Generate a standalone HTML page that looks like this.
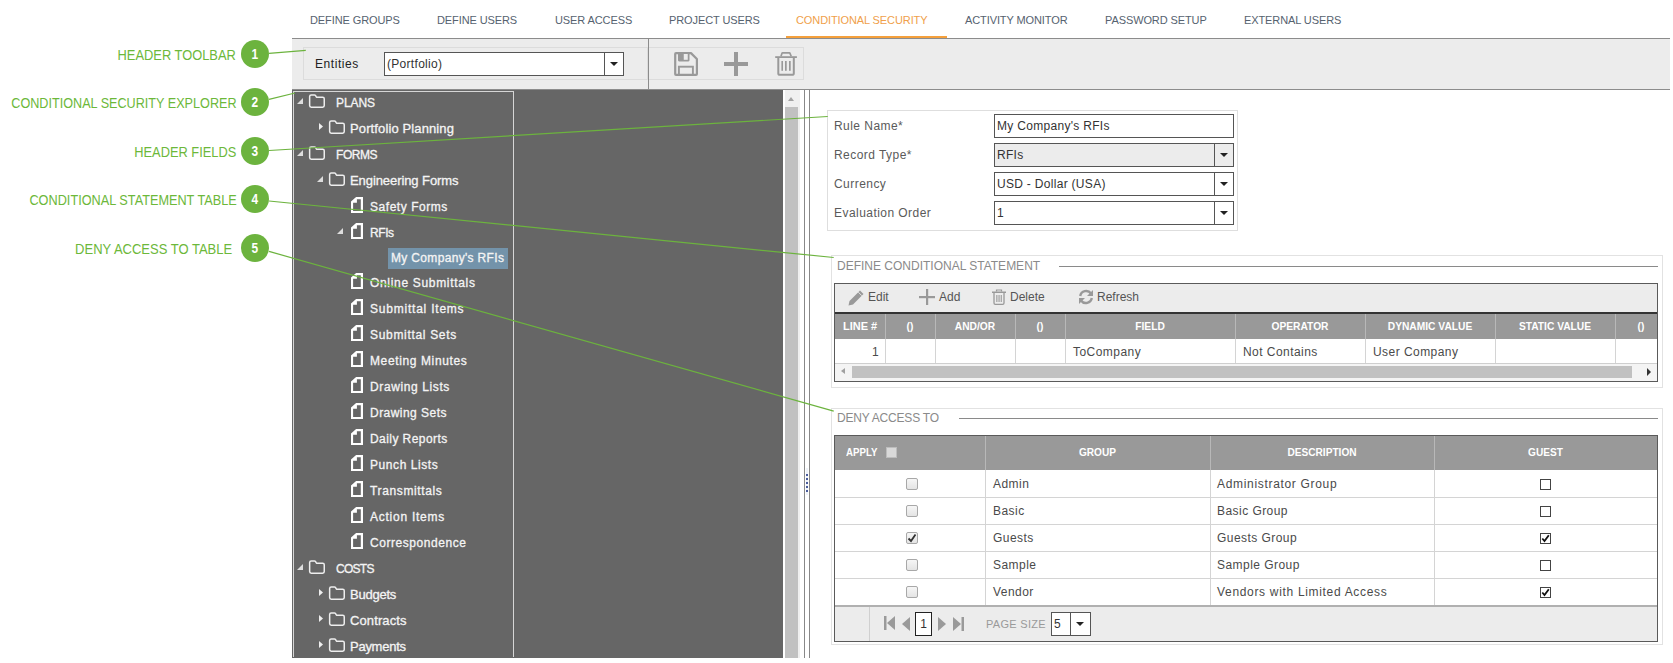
<!DOCTYPE html>
<html><head><meta charset="utf-8">
<style>
*{margin:0;padding:0;box-sizing:border-box}
html,body{width:1673px;height:663px;overflow:hidden;background:#fff}
body{position:relative;font-family:"Liberation Sans",sans-serif;font-size:13px;color:#333}
.a{position:absolute}
.nav{position:absolute;top:14px;font-size:11px;color:#56626f;letter-spacing:-0.1px;line-height:12px;white-space:nowrap}
.lbl{position:absolute;font-size:15px;color:#6cb83a;white-space:nowrap;line-height:16px;transform:scaleX(0.86);transform-origin:right center;text-align:right}
.circ{position:absolute;width:28px;height:28px;border-radius:50%;background:#6cb33e;color:#fff;font-size:14px;font-weight:bold;text-align:center;line-height:28px}
.circ span{display:inline-block;transform:scaleX(0.85)}
.tr{position:absolute;color:#f4f4f4;font-size:12px;white-space:nowrap;line-height:16px;letter-spacing:0.35px;-webkit-text-stroke:0.3px #f4f4f4}
.hl{position:absolute;font-size:12px;color:#5a5a5a;white-space:nowrap;line-height:16px;letter-spacing:0.45px}
.inp{position:absolute;border:1px solid #555;background:#fff;height:24px;font-size:12px;line-height:23px;padding-left:2px;color:#333;white-space:nowrap;letter-spacing:0.3px}
.dd{position:absolute;top:0;right:0;width:19px;height:22px;border-left:1px solid #555}
.dd:after{content:"";position:absolute;left:5px;top:9px;border-left:4px solid transparent;border-right:4px solid transparent;border-top:4.5px solid #222}
.gh{position:absolute;color:#fff;font-weight:bold;font-size:11px;line-height:12px;white-space:nowrap}
.cell{position:absolute;font-size:12px;color:#4a4a4a;white-space:nowrap;line-height:16px;letter-spacing:0.45px}
.vl{position:absolute;width:1px;background:#d0d0d0}
.hlin{position:absolute;height:1px;background:#d0d0d0}
.sect{position:absolute;font-size:12px;color:#8a8a8a;line-height:13px;white-space:nowrap;letter-spacing:0px}
.tb{position:absolute;font-size:12px;color:#555;line-height:16px;white-space:nowrap}
</style></head><body>

<!-- NAV TABS -->
<div class="nav" style="left:310px">DEFINE GROUPS</div>
<div class="nav" style="left:437px">DEFINE USERS</div>
<div class="nav" style="left:555px">USER ACCESS</div>
<div class="nav" style="left:669px">PROJECT USERS</div>
<div class="nav" style="left:796px;color:#f0a04a">CONDITIONAL SECURITY</div>
<div class="nav" style="left:965px">ACTIVITY MONITOR</div>
<div class="nav" style="left:1105px">PASSWORD SETUP</div>
<div class="nav" style="left:1244px">EXTERNAL USERS</div>
<div class="a" style="left:786px;top:36px;width:161px;height:2px;background:#f5a03c"></div>

<!-- TOOLBAR -->
<div class="a" style="left:292px;top:38px;width:1378px;height:52px;background:#ececec;border-top:1px solid #8c8c8c;border-bottom:1px solid #8c8c8c"></div>
<div class="a" style="left:648px;top:39px;width:1px;height:50px;background:#8c8c8c"></div>
<div class="a" style="left:303px;top:47px;width:345px;height:33px;border:1px solid #dcdcdc"></div>
<div class="a" style="left:649px;top:47px;width:155px;height:33px;border:1px solid #dcdcdc;border-left:none"></div>
<div class="a" style="left:315px;top:56px;font-size:12px;color:#222;line-height:16px;letter-spacing:0.55px">Entities</div>
<div class="inp" style="left:384px;top:52px;width:240px;color:#333">(Portfolio)<div class="dd"></div></div>
<!-- save icon -->
<svg class="a" style="left:674px;top:52px" width="24" height="24" viewBox="0 0 24 24"><path d="M1.2 2 Q1.2 1.1 2 1.1 H17 L22.9 7 V22 Q22.9 22.9 22 22.9 H2 Q1.2 22.9 1.2 22 Z" fill="none" stroke="#999" stroke-width="2.2" stroke-linejoin="round"/><path d="M4 1 H15.5 V8.3 Q15.5 9.4 14.4 9.4 H5.1 Q4 9.4 4 8.3 Z" fill="#999"/><rect x="9.75" y="2" width="4" height="5.8" fill="#ececec"/><rect x="4.9" y="14.7" width="14" height="8.3" fill="none" stroke="#999" stroke-width="1.9"/></svg>
<!-- plus -->
<svg class="a" style="left:724px;top:52px" width="24" height="24" viewBox="0 0 24 24"><rect x="10" y="0" width="4" height="24" fill="#999"/><rect x="0" y="10" width="24" height="4" fill="#999"/></svg>
<!-- trash -->
<svg class="a" style="left:775px;top:52px" width="22" height="24" viewBox="0 0 22 24"><rect x="0.2" y="4.2" width="21.7" height="1.8" fill="#999"/><path d="M6 4.2 L7 1.3 Q7.3 0.8 8 0.8 H14 Q14.7 0.8 15 1.3 L16.2 4.2" fill="none" stroke="#999" stroke-width="1.7"/><path d="M3.3 5.5 V21.5 Q3.3 22.8 5 22.8 H17 Q18.8 22.8 18.8 21.5 V5.5" fill="none" stroke="#999" stroke-width="2"/><rect x="6.4" y="9" width="1.6" height="9.8" fill="#999"/><rect x="10" y="9" width="1.7" height="9.8" fill="#999"/><rect x="14" y="9" width="1.7" height="9.8" fill="#999"/></svg>
<!-- TREE PANEL -->
<div class="a" style="left:292px;top:90px;width:491px;height:568px;background:#666"></div>
<div class="a" style="left:293px;top:91px;width:221px;height:566px;border:1px solid #d6d6d6;border-bottom:none"></div>
<!-- scrollbar -->
<div class="a" style="left:785px;top:90px;width:15px;height:568px;background:#f0f0f0"></div>
<div class="a" style="left:785px;top:107px;width:13px;height:551px;background:#c1c1c1"></div>
<div class="a" style="left:788px;top:97px;border-left:3.5px solid transparent;border-right:3.5px solid transparent;border-bottom:4px solid #a3a3a3"></div>
<div class="a" style="left:804px;top:90px;width:1px;height:568px;background:#888"></div>
<div class="a" style="left:809px;top:90px;width:1px;height:568px;background:#888"></div>

<div id="tree">
<svg class="a" style="left:297px;top:98px" width="6" height="6"><path d="M6 0 V6 H0 Z" fill="#ddd"/></svg>
<svg class="a" style="left:308px;top:94px" width="18" height="15"><path d="M1.65 11.6 V2.5 Q1.65 0.95 3.2 0.95 H6.5 Q7.2 0.95 7.6 1.6 L8.3 2.8 Q8.6 3.3 9.3 3.3 H14.7 Q16.25 3.3 16.25 4.8 V11.6 Q16.25 13.15 14.7 13.15 H3.2 Q1.65 13.15 1.65 11.6 Z" fill="none" stroke="#eee" stroke-width="1.5"/></svg>
<div class="tr" style="left:336px;top:95px;font-size:12px;letter-spacing:-0.1px">PLANS</div>
<svg class="a" style="left:319px;top:123px" width="4" height="7"><path d="M0 0 L4 3.5 L0 7 Z" fill="#eee"/></svg>
<svg class="a" style="left:328px;top:120px" width="18" height="15"><path d="M1.65 11.6 V2.5 Q1.65 0.95 3.2 0.95 H6.5 Q7.2 0.95 7.6 1.6 L8.3 2.8 Q8.6 3.3 9.3 3.3 H14.7 Q16.25 3.3 16.25 4.8 V11.6 Q16.25 13.15 14.7 13.15 H3.2 Q1.65 13.15 1.65 11.6 Z" fill="none" stroke="#eee" stroke-width="1.5"/></svg>
<div class="tr" style="left:350px;top:121px;font-size:13px;letter-spacing:0.12px">Portfolio Planning</div>
<svg class="a" style="left:297px;top:150px" width="6" height="6"><path d="M6 0 V6 H0 Z" fill="#ddd"/></svg>
<svg class="a" style="left:308px;top:146px" width="18" height="15"><path d="M1.65 11.6 V2.5 Q1.65 0.95 3.2 0.95 H6.5 Q7.2 0.95 7.6 1.6 L8.3 2.8 Q8.6 3.3 9.3 3.3 H14.7 Q16.25 3.3 16.25 4.8 V11.6 Q16.25 13.15 14.7 13.15 H3.2 Q1.65 13.15 1.65 11.6 Z" fill="none" stroke="#eee" stroke-width="1.5"/></svg>
<div class="tr" style="left:336px;top:147px;font-size:12px;letter-spacing:-0.45px">FORMS</div>
<svg class="a" style="left:317px;top:176px" width="6" height="6"><path d="M6 0 V6 H0 Z" fill="#ddd"/></svg>
<svg class="a" style="left:328px;top:172px" width="18" height="15"><path d="M1.65 11.6 V2.5 Q1.65 0.95 3.2 0.95 H6.5 Q7.2 0.95 7.6 1.6 L8.3 2.8 Q8.6 3.3 9.3 3.3 H14.7 Q16.25 3.3 16.25 4.8 V11.6 Q16.25 13.15 14.7 13.15 H3.2 Q1.65 13.15 1.65 11.6 Z" fill="none" stroke="#eee" stroke-width="1.5"/></svg>
<div class="tr" style="left:350px;top:173px;font-size:13px;letter-spacing:-0.08px">Engineering Forms</div>
<svg class="a" style="left:351px;top:197px" width="12" height="16"><path d="M0 4.5 L5.1 0 H12 V16 H0 Z M5.9 2.15 V5.8 H2.1 V13.9 H9.8 V2.15 Z" fill="#fff" fill-rule="evenodd"/></svg>
<div class="tr" style="left:370px;top:199px;letter-spacing:0.54px">Safety Forms</div>
<svg class="a" style="left:337px;top:228px" width="6" height="6"><path d="M6 0 V6 H0 Z" fill="#ddd"/></svg>
<svg class="a" style="left:351px;top:223px" width="12" height="16"><path d="M0 4.5 L5.1 0 H12 V16 H0 Z M5.9 2.15 V5.8 H2.1 V13.9 H9.8 V2.15 Z" fill="#fff" fill-rule="evenodd"/></svg>
<div class="tr" style="left:370px;top:225px;letter-spacing:-0.43px">RFIs</div>
<div class="a" style="left:388px;top:248px;width:120px;height:21px;background:#7393aa"></div>
<div class="tr" style="left:391px;top:250px;letter-spacing:0.33px">My Company's RFIs</div>
<svg class="a" style="left:351px;top:273px" width="12" height="16"><path d="M0 4.5 L5.1 0 H12 V16 H0 Z M5.9 2.15 V5.8 H2.1 V13.9 H9.8 V2.15 Z" fill="#fff" fill-rule="evenodd"/></svg>
<div class="tr" style="left:370px;top:275px;letter-spacing:0.68px">Online Submittals</div>
<svg class="a" style="left:351px;top:299px" width="12" height="16"><path d="M0 4.5 L5.1 0 H12 V16 H0 Z M5.9 2.15 V5.8 H2.1 V13.9 H9.8 V2.15 Z" fill="#fff" fill-rule="evenodd"/></svg>
<div class="tr" style="left:370px;top:301px;letter-spacing:0.78px">Submittal Items</div>
<svg class="a" style="left:351px;top:325px" width="12" height="16"><path d="M0 4.5 L5.1 0 H12 V16 H0 Z M5.9 2.15 V5.8 H2.1 V13.9 H9.8 V2.15 Z" fill="#fff" fill-rule="evenodd"/></svg>
<div class="tr" style="left:370px;top:327px;letter-spacing:0.68px">Submittal Sets</div>
<svg class="a" style="left:351px;top:351px" width="12" height="16"><path d="M0 4.5 L5.1 0 H12 V16 H0 Z M5.9 2.15 V5.8 H2.1 V13.9 H9.8 V2.15 Z" fill="#fff" fill-rule="evenodd"/></svg>
<div class="tr" style="left:370px;top:353px;letter-spacing:0.62px">Meeting Minutes</div>
<svg class="a" style="left:351px;top:377px" width="12" height="16"><path d="M0 4.5 L5.1 0 H12 V16 H0 Z M5.9 2.15 V5.8 H2.1 V13.9 H9.8 V2.15 Z" fill="#fff" fill-rule="evenodd"/></svg>
<div class="tr" style="left:370px;top:379px;letter-spacing:0.61px">Drawing Lists</div>
<svg class="a" style="left:351px;top:403px" width="12" height="16"><path d="M0 4.5 L5.1 0 H12 V16 H0 Z M5.9 2.15 V5.8 H2.1 V13.9 H9.8 V2.15 Z" fill="#fff" fill-rule="evenodd"/></svg>
<div class="tr" style="left:370px;top:405px;letter-spacing:0.46px">Drawing Sets</div>
<svg class="a" style="left:351px;top:429px" width="12" height="16"><path d="M0 4.5 L5.1 0 H12 V16 H0 Z M5.9 2.15 V5.8 H2.1 V13.9 H9.8 V2.15 Z" fill="#fff" fill-rule="evenodd"/></svg>
<div class="tr" style="left:370px;top:431px;letter-spacing:0.43px">Daily Reports</div>
<svg class="a" style="left:351px;top:455px" width="12" height="16"><path d="M0 4.5 L5.1 0 H12 V16 H0 Z M5.9 2.15 V5.8 H2.1 V13.9 H9.8 V2.15 Z" fill="#fff" fill-rule="evenodd"/></svg>
<div class="tr" style="left:370px;top:457px;letter-spacing:0.57px">Punch Lists</div>
<svg class="a" style="left:351px;top:481px" width="12" height="16"><path d="M0 4.5 L5.1 0 H12 V16 H0 Z M5.9 2.15 V5.8 H2.1 V13.9 H9.8 V2.15 Z" fill="#fff" fill-rule="evenodd"/></svg>
<div class="tr" style="left:370px;top:483px;letter-spacing:0.63px">Transmittals</div>
<svg class="a" style="left:351px;top:507px" width="12" height="16"><path d="M0 4.5 L5.1 0 H12 V16 H0 Z M5.9 2.15 V5.8 H2.1 V13.9 H9.8 V2.15 Z" fill="#fff" fill-rule="evenodd"/></svg>
<div class="tr" style="left:370px;top:509px;letter-spacing:0.75px">Action Items</div>
<svg class="a" style="left:351px;top:533px" width="12" height="16"><path d="M0 4.5 L5.1 0 H12 V16 H0 Z M5.9 2.15 V5.8 H2.1 V13.9 H9.8 V2.15 Z" fill="#fff" fill-rule="evenodd"/></svg>
<div class="tr" style="left:370px;top:535px;letter-spacing:0.55px">Correspondence</div>
<svg class="a" style="left:297px;top:564px" width="6" height="6"><path d="M6 0 V6 H0 Z" fill="#ddd"/></svg>
<svg class="a" style="left:308px;top:560px" width="18" height="15"><path d="M1.65 11.6 V2.5 Q1.65 0.95 3.2 0.95 H6.5 Q7.2 0.95 7.6 1.6 L8.3 2.8 Q8.6 3.3 9.3 3.3 H14.7 Q16.25 3.3 16.25 4.8 V11.6 Q16.25 13.15 14.7 13.15 H3.2 Q1.65 13.15 1.65 11.6 Z" fill="none" stroke="#eee" stroke-width="1.5"/></svg>
<div class="tr" style="left:336px;top:561px;font-size:12px;letter-spacing:-0.72px">COSTS</div>
<svg class="a" style="left:319px;top:589px" width="4" height="7"><path d="M0 0 L4 3.5 L0 7 Z" fill="#eee"/></svg>
<svg class="a" style="left:328px;top:586px" width="18" height="15"><path d="M1.65 11.6 V2.5 Q1.65 0.95 3.2 0.95 H6.5 Q7.2 0.95 7.6 1.6 L8.3 2.8 Q8.6 3.3 9.3 3.3 H14.7 Q16.25 3.3 16.25 4.8 V11.6 Q16.25 13.15 14.7 13.15 H3.2 Q1.65 13.15 1.65 11.6 Z" fill="none" stroke="#eee" stroke-width="1.5"/></svg>
<div class="tr" style="left:350px;top:587px;font-size:13px;letter-spacing:-0.23px">Budgets</div>
<svg class="a" style="left:319px;top:615px" width="4" height="7"><path d="M0 0 L4 3.5 L0 7 Z" fill="#eee"/></svg>
<svg class="a" style="left:328px;top:612px" width="18" height="15"><path d="M1.65 11.6 V2.5 Q1.65 0.95 3.2 0.95 H6.5 Q7.2 0.95 7.6 1.6 L8.3 2.8 Q8.6 3.3 9.3 3.3 H14.7 Q16.25 3.3 16.25 4.8 V11.6 Q16.25 13.15 14.7 13.15 H3.2 Q1.65 13.15 1.65 11.6 Z" fill="none" stroke="#eee" stroke-width="1.5"/></svg>
<div class="tr" style="left:350px;top:613px;font-size:13px;letter-spacing:0.11px">Contracts</div>
<svg class="a" style="left:319px;top:641px" width="4" height="7"><path d="M0 0 L4 3.5 L0 7 Z" fill="#eee"/></svg>
<svg class="a" style="left:328px;top:638px" width="18" height="15"><path d="M1.65 11.6 V2.5 Q1.65 0.95 3.2 0.95 H6.5 Q7.2 0.95 7.6 1.6 L8.3 2.8 Q8.6 3.3 9.3 3.3 H14.7 Q16.25 3.3 16.25 4.8 V11.6 Q16.25 13.15 14.7 13.15 H3.2 Q1.65 13.15 1.65 11.6 Z" fill="none" stroke="#eee" stroke-width="1.5"/></svg>
<div class="tr" style="left:350px;top:639px;font-size:13px;letter-spacing:-0.26px">Payments</div>
</div>

<!-- HEADER FIELDS -->
<div class="a" style="left:827px;top:110px;width:411px;height:121px;border:1px solid #dedede"></div>
<div class="hl" style="left:834px;top:118px">Rule Name*</div>
<div class="hl" style="left:834px;top:147px">Record Type*</div>
<div class="hl" style="left:834px;top:176px">Currency</div>
<div class="hl" style="left:834px;top:205px">Evaluation Order</div>
<div class="inp" style="left:994px;top:114px;width:240px">My Company's RFIs</div>
<div class="inp" style="left:994px;top:143px;width:240px;background:#ececec">RFIs<div class="dd"></div></div>
<div class="inp" style="left:994px;top:172px;width:240px">USD - Dollar (USA)<div class="dd"></div></div>
<div class="inp" style="left:994px;top:201px;width:240px">1<div class="dd"></div></div>

<div id="grids">
<div class="a" style="left:831px;top:255px;width:832px;height:133px;border:1px solid #e2e2e2"></div>
<div class="sect" style="left:837px;top:260px">DEFINE CONDITIONAL STATEMENT</div>
<div class="a" style="left:1059px;top:266px;width:599px;height:1px;background:#8a8a8a"></div>
<div class="a" style="left:834px;top:283px;width:824px;height:99px;border:1px solid #5a5a5a;background:#fff"></div>
<div class="a" style="left:835px;top:284px;width:822px;height:29px;background:#ececec"></div>
<div class="a" style="left:835px;top:312px;width:822px;height:2px;background:#333"></div>
<div class="a" style="left:835px;top:314px;width:822px;height:25px;background:#999"></div>
<div class="a" style="left:835px;top:363px;width:822px;height:1px;background:#cfcfcf"></div>
<div class="a" style="left:885px;top:314px;width:1px;height:25px;background:#b8b8b8"></div>
<div class="a" style="left:885px;top:339px;width:1px;height:24px;background:#d4d4d4"></div>
<div class="a" style="left:935px;top:314px;width:1px;height:25px;background:#b8b8b8"></div>
<div class="a" style="left:935px;top:339px;width:1px;height:24px;background:#d4d4d4"></div>
<div class="a" style="left:1015px;top:314px;width:1px;height:25px;background:#b8b8b8"></div>
<div class="a" style="left:1015px;top:339px;width:1px;height:24px;background:#d4d4d4"></div>
<div class="a" style="left:1065px;top:314px;width:1px;height:25px;background:#b8b8b8"></div>
<div class="a" style="left:1065px;top:339px;width:1px;height:24px;background:#d4d4d4"></div>
<div class="a" style="left:1235px;top:314px;width:1px;height:25px;background:#b8b8b8"></div>
<div class="a" style="left:1235px;top:339px;width:1px;height:24px;background:#d4d4d4"></div>
<div class="a" style="left:1365px;top:314px;width:1px;height:25px;background:#b8b8b8"></div>
<div class="a" style="left:1365px;top:339px;width:1px;height:24px;background:#d4d4d4"></div>
<div class="a" style="left:1495px;top:314px;width:1px;height:25px;background:#b8b8b8"></div>
<div class="a" style="left:1495px;top:339px;width:1px;height:24px;background:#d4d4d4"></div>
<div class="a" style="left:1615px;top:314px;width:1px;height:25px;background:#b8b8b8"></div>
<div class="a" style="left:1615px;top:339px;width:1px;height:24px;background:#d4d4d4"></div>
<div class="gh" style="left:843px;top:320px">LINE #</div>
<div class="gh" style="left:885px;top:320px;width:50px;text-align:center;transform:scaleX(0.93)">()</div>
<div class="gh" style="left:935px;top:320px;width:80px;text-align:center;transform:scaleX(0.93)">AND/OR</div>
<div class="gh" style="left:1015px;top:320px;width:50px;text-align:center;transform:scaleX(0.93)">()</div>
<div class="gh" style="left:1065px;top:320px;width:170px;text-align:center;transform:scaleX(0.93)">FIELD</div>
<div class="gh" style="left:1235px;top:320px;width:130px;text-align:center;transform:scaleX(0.93)">OPERATOR</div>
<div class="gh" style="left:1365px;top:320px;width:130px;text-align:center;transform:scaleX(0.93)">DYNAMIC VALUE</div>
<div class="gh" style="left:1495px;top:320px;width:120px;text-align:center;transform:scaleX(0.93)">STATIC VALUE</div>
<div class="gh" style="left:1620px;top:320px;width:42px;text-align:center;transform:scaleX(0.93)">()</div>
<svg class="a" style="left:848px;top:290px" width="16" height="16" viewBox="0 0 16 16"><path d="M12 0.5 L15.5 4 L5 14.5 L0.5 15.5 L1.5 11 Z" fill="#999"/><path d="M10.3 2.2 L13.8 5.7" stroke="#ececec" stroke-width="0.9"/></svg>
<div class="tb" style="left:868px;top:289px">Edit</div>
<svg class="a" style="left:919px;top:289px" width="16" height="16"><rect x="7" y="0" width="2.2" height="16" fill="#999"/><rect x="0" y="7" width="16" height="2.2" fill="#999"/></svg>
<div class="tb" style="left:939px;top:289px">Add</div>
<svg class="a" style="left:992px;top:289px" width="14" height="16" viewBox="0 0 14 16"><path d="M4.5 2.5 V1 H9.5 V2.5" fill="none" stroke="#999" stroke-width="1.2"/><rect x="0" y="2.5" width="14" height="1.5" fill="#999"/><path d="M2 4 V14 Q2 15.3 3.3 15.3 H10.7 Q12 15.3 12 14 V4" fill="none" stroke="#999" stroke-width="1.3"/><rect x="4.3" y="6" width="1.1" height="7" fill="#999"/><rect x="6.5" y="6" width="1.1" height="7" fill="#999"/><rect x="8.7" y="6" width="1.1" height="7" fill="#999"/></svg>
<div class="tb" style="left:1010px;top:289px">Delete</div>
<svg class="a" style="left:1078px;top:289px" width="16" height="16" viewBox="0 0 16 16"><path d="M2.2 7 A6 6 0 0 1 13 4.5" fill="none" stroke="#999" stroke-width="2.4"/><path d="M15 1 V7 H9 Z" fill="#999"/><path d="M13.8 9 A6 6 0 0 1 3 11.5" fill="none" stroke="#999" stroke-width="2.4"/><path d="M1 15 V9 H7 Z" fill="#999"/></svg>
<div class="tb" style="left:1097px;top:289px">Refresh</div>
<div class="cell" style="left:835px;top:344px;width:44px;text-align:right">1</div>
<div class="cell" style="left:1073px;top:344px">ToCompany</div>
<div class="cell" style="left:1243px;top:344px">Not Contains</div>
<div class="cell" style="left:1373px;top:344px">User Company</div>
<div class="a" style="left:835px;top:364px;width:822px;height:17px;background:#f4f4f4"></div>
<div class="a" style="left:852px;top:366px;width:780px;height:12px;background:#c1c1c1"></div>
<div class="a" style="left:841px;top:368px;border-top:3.5px solid transparent;border-bottom:3.5px solid transparent;border-right:4px solid #a0a0a0"></div>
<div class="a" style="left:1647px;top:368px;border-top:4px solid transparent;border-bottom:4px solid transparent;border-left:4px solid #333"></div>
<div class="a" style="left:806px;top:468px;width:2px;height:27px;background:#eef2f8"></div>
<div class="a" style="left:806px;top:474px;width:1.5px;height:1.5px;background:#4a5c9c"></div>
<div class="a" style="left:806px;top:478px;width:1.5px;height:1.5px;background:#4a5c9c"></div>
<div class="a" style="left:806px;top:482px;width:1.5px;height:1.5px;background:#4a5c9c"></div>
<div class="a" style="left:806px;top:486px;width:1.5px;height:1.5px;background:#4a5c9c"></div>
<div class="a" style="left:806px;top:490px;width:1.5px;height:1.5px;background:#4a5c9c"></div>
<div class="a" style="left:831px;top:408px;width:832px;height:237px;border:1px solid #e2e2e2"></div>
<div class="sect" style="left:837px;top:412px;letter-spacing:-0.2px">DENY ACCESS TO</div>
<div class="a" style="left:959px;top:418px;width:699px;height:1px;background:#8a8a8a"></div>
<div class="a" style="left:834px;top:435px;width:824px;height:207px;border:1px solid #5a5a5a;background:#fff"></div>
<div class="a" style="left:835px;top:436px;width:822px;height:34px;background:#999"></div>
<div class="a" style="left:985px;top:436px;width:1px;height:34px;background:#b8b8b8"></div>
<div class="a" style="left:985px;top:470px;width:1px;height:136px;background:#d4d4d4"></div>
<div class="a" style="left:1210px;top:436px;width:1px;height:34px;background:#b8b8b8"></div>
<div class="a" style="left:1210px;top:470px;width:1px;height:136px;background:#d4d4d4"></div>
<div class="a" style="left:1434px;top:436px;width:1px;height:34px;background:#b8b8b8"></div>
<div class="a" style="left:1434px;top:470px;width:1px;height:136px;background:#d4d4d4"></div>
<div class="gh" style="left:846px;top:446px;transform:scaleX(0.88);transform-origin:left">APPLY</div>
<div class="a" style="left:886px;top:447px;width:11px;height:11px;background:#d9d9d9;border:1px solid #bdbdbd"></div>
<div class="gh" style="left:985px;top:446px;width:225px;text-align:center;transform:scaleX(0.92)">GROUP</div>
<div class="gh" style="left:1210px;top:446px;width:224px;text-align:center;transform:scaleX(0.92)">DESCRIPTION</div>
<div class="gh" style="left:1434px;top:446px;width:223px;text-align:center;transform:scaleX(0.92)">GUEST</div>
<div class="a" style="left:906px;top:478px;width:12px;height:12px;border:1px solid #a8a8a8;border-radius:2px;background:linear-gradient(#f6f6f6,#e4e4e4)"></div>
<div class="cell" style="left:993px;top:476px">Admin</div>
<div class="cell" style="left:1217px;top:476px;letter-spacing:0.68px">Administrator Group</div>
<div class="a" style="left:1540px;top:479px;width:11px;height:11px;border:1px solid #444;background:#fff"></div>
<div class="a" style="left:835px;top:497px;width:822px;height:1px;background:#d4d4d4"></div>
<div class="a" style="left:906px;top:505px;width:12px;height:12px;border:1px solid #a8a8a8;border-radius:2px;background:linear-gradient(#f6f6f6,#e4e4e4)"></div>
<div class="cell" style="left:993px;top:503px">Basic</div>
<div class="cell" style="left:1217px;top:503px">Basic Group</div>
<div class="a" style="left:1540px;top:506px;width:11px;height:11px;border:1px solid #444;background:#fff"></div>
<div class="a" style="left:835px;top:524px;width:822px;height:1px;background:#d4d4d4"></div>
<div class="a" style="left:906px;top:532px;width:12px;height:12px;border:1px solid #a8a8a8;border-radius:2px;background:linear-gradient(#f6f6f6,#e4e4e4)"></div>
<svg class="a" style="left:906px;top:532px" width="12" height="12"><path d="M2.5 6.5 L5 9 L9.5 2.5" fill="none" stroke="#333" stroke-width="1.8"/></svg>
<div class="cell" style="left:993px;top:530px">Guests</div>
<div class="cell" style="left:1217px;top:530px">Guests Group</div>
<div class="a" style="left:1540px;top:533px;width:11px;height:11px;border:1px solid #444;background:#fff"></div>
<svg class="a" style="left:1540px;top:533px" width="11" height="11"><path d="M2.3 5.5 L4.5 8 L8.8 2.2" fill="none" stroke="#111" stroke-width="1.8"/></svg>
<div class="a" style="left:835px;top:551px;width:822px;height:1px;background:#d4d4d4"></div>
<div class="a" style="left:906px;top:559px;width:12px;height:12px;border:1px solid #a8a8a8;border-radius:2px;background:linear-gradient(#f6f6f6,#e4e4e4)"></div>
<div class="cell" style="left:993px;top:557px">Sample</div>
<div class="cell" style="left:1217px;top:557px">Sample Group</div>
<div class="a" style="left:1540px;top:560px;width:11px;height:11px;border:1px solid #444;background:#fff"></div>
<div class="a" style="left:835px;top:578px;width:822px;height:1px;background:#d4d4d4"></div>
<div class="a" style="left:906px;top:586px;width:12px;height:12px;border:1px solid #a8a8a8;border-radius:2px;background:linear-gradient(#f6f6f6,#e4e4e4)"></div>
<div class="cell" style="left:993px;top:584px">Vendor</div>
<div class="cell" style="left:1217px;top:584px;letter-spacing:0.68px">Vendors with Limited Access</div>
<div class="a" style="left:1540px;top:587px;width:11px;height:11px;border:1px solid #444;background:#fff"></div>
<svg class="a" style="left:1540px;top:587px" width="11" height="11"><path d="M2.3 5.5 L4.5 8 L8.8 2.2" fill="none" stroke="#111" stroke-width="1.8"/></svg>
<div class="a" style="left:835px;top:605px;width:822px;height:2px;background:#b0b0b0"></div>
<div class="a" style="left:835px;top:607px;width:822px;height:34px;background:#ececec"></div>
<div class="a" style="left:869px;top:607px;width:1px;height:34px;background:#d0d0d0"></div>
<svg class="a" style="left:884px;top:616px" width="12" height="15"><rect x="0" y="0" width="2.5" height="14" fill="#9a9a9a"/><path d="M11 0 V14 L3 7 Z" fill="#9a9a9a"/></svg>
<svg class="a" style="left:901px;top:617px" width="10" height="14"><path d="M9 0 V14 L1 7 Z" fill="#9a9a9a"/></svg>
<div class="a" style="left:915px;top:612px;width:17px;height:24px;border:1px solid #222;background:#fff;font-size:12px;line-height:22px;text-align:center;color:#333">1</div>
<svg class="a" style="left:937px;top:617px" width="10" height="14"><path d="M1 0 V14 L9 7 Z" fill="#9a9a9a"/></svg>
<svg class="a" style="left:952px;top:617px" width="12" height="14"><path d="M1 0 V14 L9 7 Z" fill="#9a9a9a"/><rect x="9.5" y="0" width="2.5" height="14" fill="#9a9a9a"/></svg>
<div class="a" style="left:986px;top:617px;font-size:11px;color:#9a9a9a;line-height:14px;letter-spacing:0.3px">PAGE SIZE</div>
<div class="inp" style="left:1051px;top:612px;width:40px;height:24px">5<div class="dd" style="width:20px"></div></div>
</div>
<div id="annot">
<div class="lbl" style="right:1436.7px;top:47px;transform:scaleX(0.858)">HEADER TOOLBAR</div>
<div class="lbl" style="right:1436.7px;top:95px;transform:scaleX(0.842)">CONDITIONAL SECURITY EXPLORER</div>
<div class="lbl" style="right:1436.7px;top:144px;transform:scaleX(0.855)">HEADER FIELDS</div>
<div class="lbl" style="right:1436.7px;top:192px;transform:scaleX(0.847)">CONDITIONAL STATEMENT TABLE</div>
<div class="lbl" style="right:1440.7px;top:241px;transform:scaleX(0.867)">DENY ACCESS TO TABLE</div>
<svg class="a" style="left:0;top:0" width="1673" height="663"><line x1="269" y1="53.3" x2="305.8" y2="50.3" stroke="#6cb33e" stroke-width="1.2"/><line x1="269" y1="99.4" x2="295" y2="93" stroke="#6cb33e" stroke-width="1.2"/><line x1="269" y1="150.5" x2="827.7" y2="116.5" stroke="#6cb33e" stroke-width="1.2"/><line x1="269" y1="201" x2="833.7" y2="257.5" stroke="#6cb33e" stroke-width="1.2"/><line x1="269" y1="251.4" x2="833.7" y2="411.2" stroke="#6cb33e" stroke-width="1.2"/></svg>
<div class="circ" style="left:241px;top:40px"><span>1</span></div>
<div class="circ" style="left:241px;top:88px"><span>2</span></div>
<div class="circ" style="left:241px;top:137px"><span>3</span></div>
<div class="circ" style="left:241px;top:185px"><span>4</span></div>
<div class="circ" style="left:241px;top:234px"><span>5</span></div>
</div>
</body></html>
